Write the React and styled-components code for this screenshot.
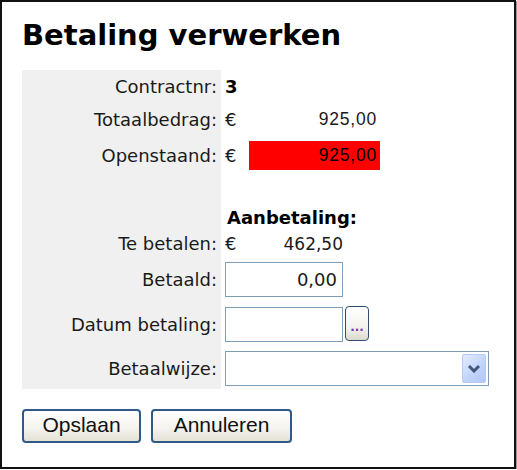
import React from 'react';
import styled, { createGlobalStyle } from 'styled-components';

const GlobalStyle = createGlobalStyle`
  html, body {
    margin: 0;
    padding: 0;
    background: #ffffff;
  }
  body {
    font-family: 'DejaVu Sans', Verdana, sans-serif;
    color: #111;
  }
`;

const Frame = styled.div`
  box-sizing: border-box;
  width: 516px;
  height: 469px;
  border: 2px solid #111;
  box-shadow: 1px 1px 0 #9a9a9a;
  padding: 16px 20px 0 20px;
`;

const Title = styled.h1`
  margin: 0 0 18px 0;
  font-family: 'DejaVu Sans', Verdana, sans-serif;
  font-weight: bold;
  font-size: 29px;
  line-height: 34px;
  color: #000;
`;

const Form = styled.div`
  display: flex;
  flex-direction: column;
`;

const Row = styled.div`
  display: grid;
  grid-template-columns: 199px 1fr;
  height: ${(p) => p.h}px;
`;

const Label = styled.div`
  background: #f0f0f0;
  display: flex;
  align-items: center;
  justify-content: flex-end;
  padding-right: 4px;
  font-size: 18px;
  color: #1a1a1a;
  white-space: nowrap;
`;

const Value = styled.div`
  display: flex;
  align-items: center;
  padding-left: ${(p) => (p.indent ? 6 : 4)}px;
  font-size: 18px;
  color: #1a1a1a;
  white-space: nowrap;
`;

const Strong = styled.span`
  font-weight: bold;
  color: #000;
`;

const Euro = styled.span`
  display: inline-block;
  width: 24px;
`;

const Amount = styled.span`
  box-sizing: border-box;
  display: flex;
  align-items: center;
  justify-content: flex-end;
  width: ${(p) => p.w || 131}px;
  height: 29px;
  padding-right: 3px;
  background: ${(p) => (p.alert ? '#ff0000' : 'transparent')};
  font-family: ${(p) => (p.plain ? "'DejaVu Sans', Verdana" : "'Liberation Sans', Arial")}, sans-serif;
  font-size: ${(p) => (p.plain ? 17 : 17.5)}px;
  letter-spacing: ${(p) => (p.plain ? 0 : 0.8)}px;
  color: ${(p) => (p.alert ? '#000' : '#1a1a1a')};
`;

const TextBox = styled.input`
  box-sizing: border-box;
  width: 118px;
  height: 35px;
  margin: 0;
  border: 1px solid #7f9db9;
  padding: 0 5px;
  background: #fff;
  font-family: 'DejaVu Sans', Verdana, sans-serif;
  font-size: 18px;
  color: #1a1a1a;
  text-align: right;
  outline: none;
`;

const Pick = styled.button`
  box-sizing: border-box;
  width: 24px;
  height: 35px;
  margin: -2px 0 0 2px;
  padding: 0 0 6px 0;
  border: 1.5px solid #2e4f72;
  border-radius: 4px;
  background: linear-gradient(#ffffff, #f4f3ee 60%, #dcd9cc);
  font-family: 'DejaVu Sans', Verdana, sans-serif;
  font-size: 12px;
  font-weight: bold;
  color: #7a3aa8;
  display: flex;
  align-items: flex-end;
  justify-content: center;
`;

const Select = styled.div`
  box-sizing: border-box;
  width: 264px;
  height: 35px;
  border: 1px solid #7f9db9;
  background: #fff;
  display: flex;
  justify-content: flex-end;
  align-items: center;
  padding-right: 2px;
`;

const Arrow = styled.span`
  box-sizing: border-box;
  width: 24px;
  height: 29px;
  border: 1px solid #b6cbf3;
  border-radius: 2px;
  background: linear-gradient(135deg, #e3ecfe, #c3d5fb 55%, #b2c7f6);
  display: flex;
  align-items: center;
  justify-content: center;
`;

const Actions = styled.div`
  display: flex;
  gap: 10px;
  margin-top: 20px;
`;

const Button = styled.button`
  box-sizing: border-box;
  width: ${(p) => p.w}px;
  height: 34px;
  margin: 0;
  padding: 0 0 2px 0;
  border: 2px solid #2f5a88;
  border-radius: 4px;
  background: linear-gradient(#ffffff, #f5f4ef 55%, #e4e1d6);
  font-family: 'Liberation Sans', Arial, sans-serif;
  font-size: 21px;
  color: #111;
`;

export default function App() {
  return (
    <>
      <GlobalStyle />
      <Frame>
        <Title>Betaling verwerken</Title>
        <Form>
          <Row h={33}>
            <Label>Contractnr:</Label>
            <Value><Strong>3</Strong></Value>
          </Row>
          <Row h={32}>
            <Label>Totaalbedrag:</Label>
            <Value><Euro>€</Euro><Amount>925,00</Amount></Value>
          </Row>
          <Row h={41}>
            <Label>Openstaand:</Label>
            <Value><Euro>€</Euro><Amount alert>925,00</Amount></Value>
          </Row>
          <Row h={29}>
            <Label />
            <Value />
          </Row>
          <Row h={24}>
            <Label />
            <Value indent><Strong>Aanbetaling:</Strong></Value>
          </Row>
          <Row h={29}>
            <Label>Te betalen:</Label>
            <Value><Euro>€</Euro><Amount plain w={97}>462,50</Amount></Value>
          </Row>
          <Row h={43}>
            <Label>Betaald:</Label>
            <Value><TextBox defaultValue="0,00" /></Value>
          </Row>
          <Row h={46}>
            <Label>Datum betaling:</Label>
            <Value>
              <TextBox defaultValue="" />
              <Pick type="button">...</Pick>
            </Value>
          </Row>
          <Row h={42}>
            <Label>Betaalwijze:</Label>
            <Value>
              <Select>
                <Arrow>
                  <svg width="14" height="9" viewBox="0 0 14 9">
                    <polyline points="2,2 7,7 12,2" fill="none" stroke="#44577a" strokeWidth="3" />
                  </svg>
                </Arrow>
              </Select>
            </Value>
          </Row>
        </Form>
        <Actions>
          <Button w={119}>Opslaan</Button>
          <Button w={141}>Annuleren</Button>
        </Actions>
      </Frame>
    </>
  );
}
